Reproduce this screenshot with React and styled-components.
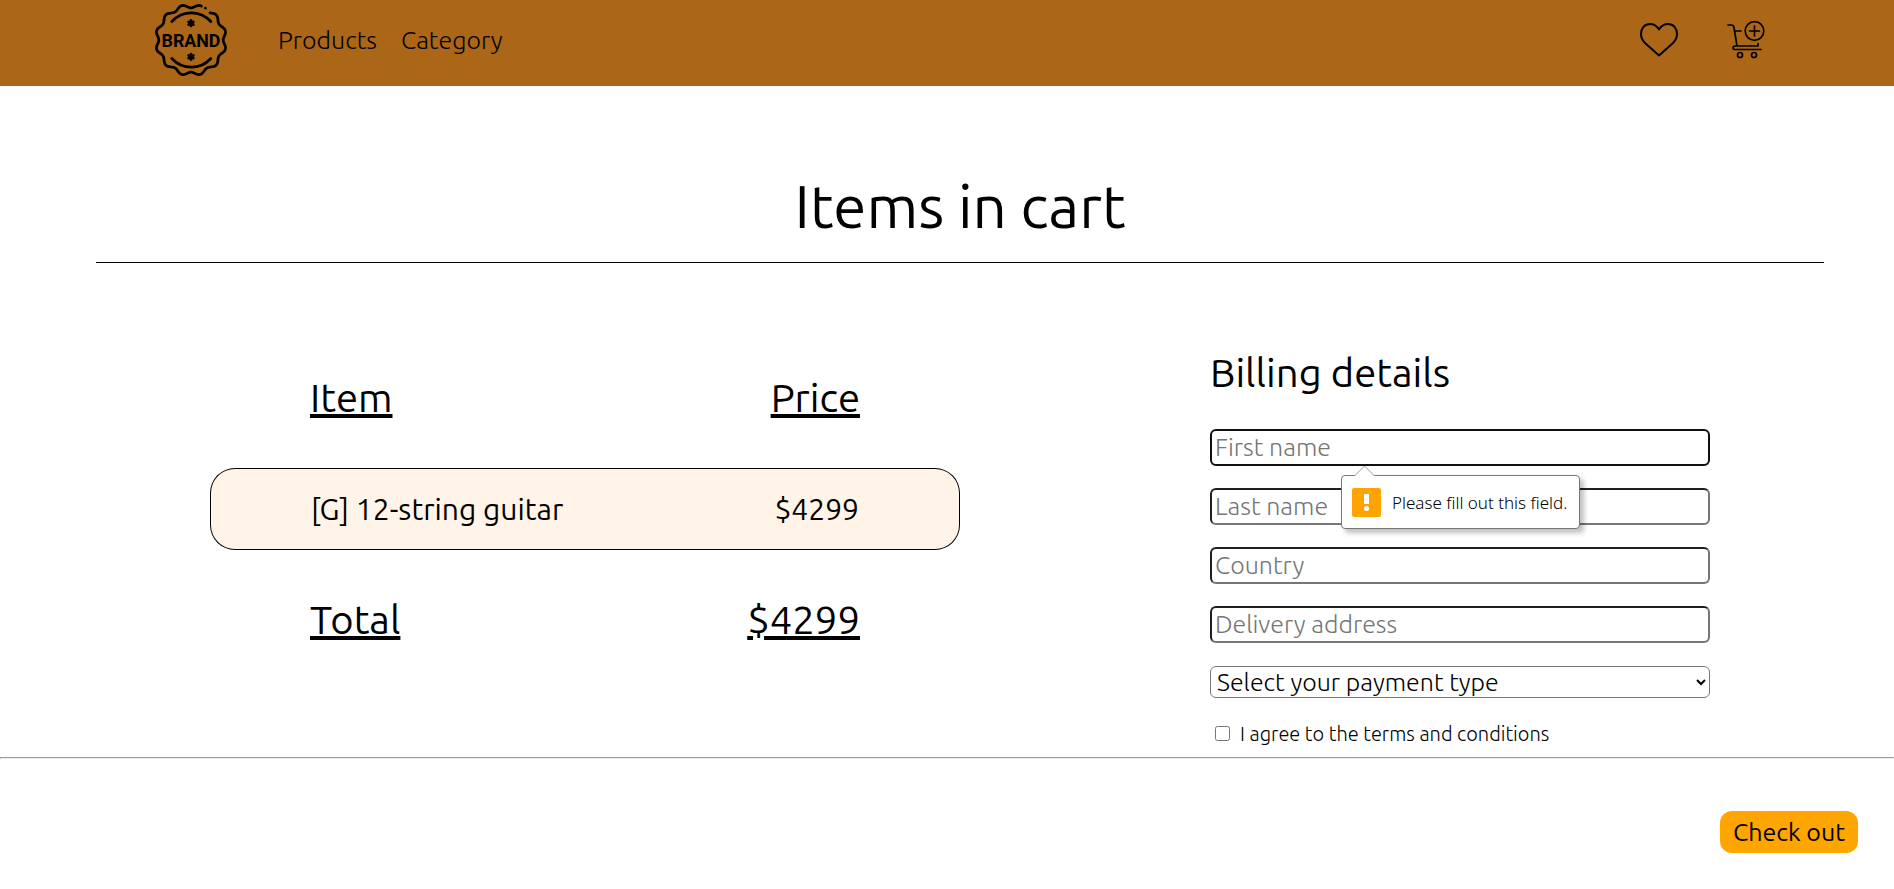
import React from "react";
import styled, { createGlobalStyle } from "styled-components";

const GlobalStyle = createGlobalStyle`
  *, *::before, *::after { box-sizing: border-box; }
  body {
    margin: 0;
    background: #fff;
    color: #000;
    font-family: Ubuntu, "Open Sans", "Noto Sans", sans-serif;
  }
`;

const NavBar = styled.header`
  display: flex;
  align-items: center;
  height: 86px;
  padding: 0 128px 6px 153px;
  background: #ab6717;
`;

const LogoLink = styled.a`
  display: block;
  height: 76px;
  margin-right: 49px;
  color: #000;
`;

const NavLinks = styled.nav`
  display: flex;
  gap: 24px;
  flex: 1;
`;

const NavLink = styled.a`
  color: #000;
  font-size: 25px;
  font-weight: 300;
  line-height: 30px;
  text-decoration: none;
`;

const NavActions = styled.div`
  display: flex;
  align-items: center;
  gap: 47px;
`;

const IconLink = styled.a`
  display: block;
  height: 40px;
  color: #000;
`;

const Page = styled.main`
  padding: 80px 70px 0 96px;
`;

const Title = styled.h1`
  margin: 0;
  padding-bottom: 16px;
  border-bottom: 1px solid #000;
  font-size: 60px;
  font-weight: 400;
  line-height: 80px;
  text-align: center;
`;

const Columns = styled.div`
  display: flex;
  justify-content: space-between;
  align-items: flex-start;
  padding: 87px 114px 9px;
`;

const CartTable = styled.table`
  width: 750px;
  margin-top: 25px;
  border-collapse: separate;
  border-spacing: 0;
`;

const SummaryCell = styled.th`
  padding: ${(p) => (p.$foot ? "47px 100px 0" : "0 100px 47px")};
  font-size: 40px;
  font-weight: 400;
  line-height: 46px;
  text-align: ${(p) => (p.$end ? "right" : "left")};
  text-decoration: underline;
  text-decoration-thickness: 4px;
  text-underline-offset: 2px;
`;

const ItemCell = styled.td`
  height: 82px;
  padding: ${(p) => (p.$end ? "0 100px 0 0" : "0 0 0 100px")};
  background: #fff4e7;
  border: 1px solid #000;
  font-size: 30px;
  white-space: nowrap;
  text-align: ${(p) => (p.$end ? "right" : "left")};
  ${(p) =>
    p.$end
      ? "border-left: 0; border-radius: 0 25px 25px 0;"
      : "border-right: 0; border-radius: 25px 0 0 25px;"}
`;

const BillingForm = styled.form`
  display: flex;
  flex-direction: column;
  gap: 22px;
  width: 500px;
`;

const FormTitle = styled.h2`
  margin: 0 0 11px;
  font-size: 40px;
  font-weight: 400;
  line-height: 46px;
`;

const Field = styled.div`
  position: relative;
  display: flex;
`;

const TextInput = styled.input`
  width: 100%;
  height: 37px;
  padding: 0 3px 2px;
  border: 2px solid;
  border-color: #1f1f1f #767676 #767676 #1f1f1f;
  border-radius: 6px;
  background: #fff;
  font-family: inherit;
  font-size: 25px;
  font-weight: 300;
  &::placeholder { color: #757575; }
  &:focus { outline: none; border-color: #101010; }
`;

const PaymentSelect = styled.select`
  height: 32px;
  margin-top: 1px;
  padding: 0 2px;
  border: 1px solid #767676;
  border-radius: 6px;
  background: #fff;
  color: #000;
  font-family: inherit;
  font-size: 25px;
  font-weight: 300;
`;

const Terms = styled.label`
  display: flex;
  align-items: center;
  gap: 10px;
  padding-left: 5px;
  font-size: 20px;
  font-weight: 300;
  line-height: 28px;
`;

const Checkbox = styled.input`
  width: 15px;
  height: 15px;
  margin: 0 0 2px;
`;

const Hint = styled.div`
  position: absolute;
  z-index: 1;
  top: 46px;
  left: 131px;
  display: flex;
  align-items: center;
  gap: 11px;
  height: 54px;
  padding: 0 12px 0 10px;
  border: 1px solid #767676;
  border-radius: 4px;
  background: #fff;
  box-shadow: 4px 4px 5px rgba(0, 0, 0, 0.25);
  font-family: "Noto Sans", sans-serif;
  font-size: 17px;
  font-weight: 300;
  white-space: nowrap;
`;

const HintArrow = styled.svg`
  position: absolute;
  top: -11px;
  left: 12px;
`;

const Rule = styled.hr`
  margin: 0;
`;

const Actions = styled.footer`
  display: flex;
  justify-content: flex-end;
  padding: 52px 36px 36px;
`;

const CheckoutButton = styled.button`
  height: 42px;
  padding: 0 13px;
  border: 0;
  border-radius: 12px;
  background: orange;
  color: #000;
  font-family: inherit;
  font-size: 25px;
  line-height: 32px;
`;

const FIELDS = ["First name", "Last name", "Country", "Delivery address"];

// Outline of the badge: a circle with twelve lobes, open at the upper right.
const badgeOutline = Array.from({ length: 172 }, (_, i) => {
  const deg = 35 + i * 2;
  const t = (deg * Math.PI) / 180;
  const r = 99 - 5 * Math.cos(12 * t);
  return `${i ? "L" : "M"}${(r * Math.sin(t)).toFixed(1)} ${(-r * Math.cos(t)).toFixed(1)}`;
}).join("");

function BrandLogo() {
  return (
    <svg width="76" height="76" viewBox="-111 -111 222 222" role="img" aria-label="Brand">
      <g fill="none" stroke="currentColor" strokeWidth="8" strokeLinecap="round" strokeLinejoin="round">
        <path d={badgeOutline} />
        <path d="M-56-54C-24-88 26-88 58-54M-56 54C-24 88 26 88 58 54" />
      </g>
      <circle cx="42" cy="-93" r="4" />
      <g stroke="currentColor" strokeWidth="8" strokeLinecap="round">
        <path d="M0-57V-41M-7-53L7-45M7-53L-7-45M0 41V57M-7 45L7 53M7 45L-7 53" />
      </g>
      <text x="0" y="20" textAnchor="middle" fontFamily="Roboto, sans-serif" fontWeight="700" fontSize="52">
        BRAND
      </text>
    </svg>
  );
}

function HeartIcon() {
  return (
    <svg width="40" height="40" viewBox="0 0 40 40" fill="none" stroke="currentColor" strokeWidth="2" strokeLinejoin="round">
      <path d="M20 9.500C17.500 5.500 14.500 4 11 4C5.500 4 2 8.500 2 14C2 18 3.500 20.500 6 23L20 35.500L34 23C36.500 20.500 38 18 38 14C38 8.500 34.500 4 29 4C25.500 4 22.500 5.500 20 9.500Z" />
    </svg>
  );
}

function CartIcon() {
  return (
    <svg width="40" height="40" viewBox="0 0 40 40" fill="none" stroke="currentColor" strokeWidth="1.700" strokeLinecap="round" strokeLinejoin="round">
      <path d="M2 5H5.500Q7.500 5 8 7.500L11 26M9 11H15M32 23.500V26H9.500Q7 26 7 28Q7 29.500 8.500 29.500H35" />
      <circle cx="28.500" cy="11" r="9.300" />
      <path d="M28.500 6V16M23.500 11H33.500" />
      <circle cx="14" cy="35" r="2.500" />
      <circle cx="28" cy="35" r="2.500" />
    </svg>
  );
}

function RequiredHint() {
  return (
    <Hint role="alert">
      <HintArrow width="22" height="12" viewBox="0 0 22 12">
        <path d="M0 12L0.500 11L10.500 1L20.500 11L21 12Z" fill="#fff" />
        <path d="M0.500 11L10.500 1L20.500 11" fill="none" stroke="#999" />
      </HintArrow>
      <svg width="29" height="29" viewBox="0 0 29 29" aria-hidden="true">
        <rect width="29" height="29" rx="2" fill="#ffa300" />
        <path d="M12 6H17V16H12Z" fill="#fff" />
        <circle cx="14.500" cy="20.500" r="2.500" fill="#fff" />
      </svg>
      Please fill out this field.
    </Hint>
  );
}

export default function App() {
  return (
    <>
      <GlobalStyle />
      <NavBar>
        <LogoLink href="#home"><BrandLogo /></LogoLink>
        <NavLinks>
          <NavLink href="#products">Products</NavLink>
          <NavLink href="#category">Category</NavLink>
        </NavLinks>
        <NavActions>
          <IconLink href="#favourites" aria-label="Favourites"><HeartIcon /></IconLink>
          <IconLink href="#cart" aria-label="Cart"><CartIcon /></IconLink>
        </NavActions>
      </NavBar>
      <Page>
        <Title>Items in cart</Title>
        <Columns>
          <CartTable>
            <thead>
              <tr>
                <SummaryCell scope="col">Item</SummaryCell>
                <SummaryCell scope="col" $end>Price</SummaryCell>
              </tr>
            </thead>
            <tbody>
              <tr>
                <ItemCell>[G] 12-string guitar</ItemCell>
                <ItemCell $end>$4299</ItemCell>
              </tr>
            </tbody>
            <tfoot>
              <tr>
                <SummaryCell scope="row" $foot>Total</SummaryCell>
                <SummaryCell as="td" $foot $end>$4299</SummaryCell>
              </tr>
            </tfoot>
          </CartTable>
          <BillingForm id="billing" noValidate onSubmit={(e) => e.preventDefault()}>
            <FormTitle>Billing details</FormTitle>
            {FIELDS.map((label, i) => (
              <Field key={label}>
                <TextInput type="text" placeholder={label} aria-label={label} autoFocus={i === 0} required />
                {i === 0 && <RequiredHint />}
              </Field>
            ))}
            <PaymentSelect aria-label="Payment type" defaultValue="">
              <option value="">Select your payment type</option>
              <option value="card">Card</option>
              <option value="cash">Cash</option>
            </PaymentSelect>
            <Terms>
              <Checkbox type="checkbox" />
              I agree to the terms and conditions
            </Terms>
          </BillingForm>
        </Columns>
      </Page>
      <Rule />
      <Actions>
        <CheckoutButton type="submit" form="billing">Check out</CheckoutButton>
      </Actions>
    </>
  );
}
